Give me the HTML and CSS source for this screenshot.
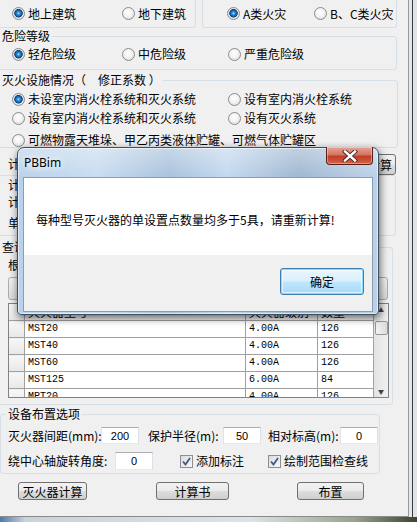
FILE: index.html
```html
<!DOCTYPE html>
<html>
  <head>
    <meta charset="utf-8">
    <title>灭火器布置</title>
    <link rel="stylesheet" href="styles.css">
  </head>
  <body>
    <div class="screen">
      <div class="dlg">
        <!-- building / fire class -->
        <div class="top-row">
          <div class="box box-left">
            <label class="opt w110"><span class="radio on"></span>地上建筑</label>
            <label class="opt"><span class="radio"></span>地下建筑</label>
          </div>
          <div class="box box-right">
            <label class="opt w87"><span class="radio on"></span>A类火灾</label>
            <label class="opt"><span class="radio"></span>B、C类火灾</label>
          </div>
        </div>

        <div class="group danger">
          <div class="cap">危险等级</div>
          <div class="opts">
            <label class="opt w110"><span class="radio on"></span>轻危险级</label>
            <label class="opt w106"><span class="radio"></span>中危险级</label>
            <label class="opt"><span class="radio"></span>严重危险级</label>
          </div>
        </div>

        <div class="group fire">
          <div class="cap">灭火设施情况（　修正系数 ）</div>
          <div class="opts r1">
            <label class="opt w216"><span class="radio on"></span>未设室内消火栓系统和灭火系统</label>
            <label class="opt"><span class="radio"></span>设有室内消火栓系统</label>
          </div>
          <div class="opts r2">
            <label class="opt w216"><span class="radio"></span>设有室内消火栓系统和灭火系统</label>
            <label class="opt"><span class="radio"></span>设有灭火系统</label>
          </div>
          <div class="opts r3">
            <label class="opt"><span class="radio"></span>可燃物露天堆垛、甲乙丙类液体贮罐、可燃气体贮罐区</label>
          </div>
        </div>

        <!-- calculation (mostly behind the message box) -->
        <div class="calc-row">
          <span>计算面积(㎡):</span>
          <button class="btn calc">计算</button>
        </div>
        <div class="box2">
          <div class="line">计算单元最小需配灭火级别:</div>
          <div class="line l2">计算单元最少设置点数:</div>
          <div class="line l3">单具灭火器最小配置灭火级别:</div>
        </div>

        <div class="group result">
          <div class="cap">查询结果</div>
          <div class="line">根据计算结果选择灭火器:</div>
          <div class="combo"></div>
          <div class="grid">
            <table class="list">
              <tr class="head"><th></th><td>灭火器型号</td><td>灭火器级别</td><td>数量</td></tr>
              <tr><th></th><td>MST20</td><td>4.00A</td><td>126</td></tr>
              <tr><th></th><td>MST40</td><td>4.00A</td><td>126</td></tr>
              <tr><th></th><td>MST60</td><td>4.00A</td><td>126</td></tr>
              <tr><th></th><td>MST125</td><td>6.00A</td><td>84</td></tr>
              <tr><th></th><td>MPT20</td><td>4.00A</td><td>126</td></tr>
            </table>
            <div class="vscroll">
              <span class="arrow">▲</span>
              <span class="thumb"></span>
              <span class="arrow down">▼</span>
            </div>
          </div>
        </div>

        <div class="group layout">
          <div class="cap">设备布置选项</div>
          <div class="frow">
            <span class="lbl w93">灭火器间距(mm):</span>
            <input class="num" value="200">
            <span class="lbl w75 ml9">保护半径(m):</span>
            <input class="num" value="50">
            <span class="lbl w72 ml7">相对标高(m):</span>
            <input class="num" value="0">
          </div>
          <div class="frow r2">
            <span class="lbl w107">绕中心轴旋转角度:</span>
            <input class="num" value="0">
            <label class="chk-opt ml27 w88">
              <span class="chk"><svg width="11" height="11" viewBox="0 0 11 11"><path d="M2 5.5 L4.5 8.5 L9 2" fill="none" stroke="#3f5a8c" stroke-width="1.8"/></svg></span>添加标注
            </label>
            <label class="chk-opt">
              <span class="chk"><svg width="11" height="11" viewBox="0 0 11 11"><path d="M2 5.5 L4.5 8.5 L9 2" fill="none" stroke="#3f5a8c" stroke-width="1.8"/></svg></span>绘制范围检查线
            </label>
          </div>
        </div>

        <div class="btns">
          <button class="btn b1">灭火器计算</button>
          <button class="btn b2">计算书</button>
          <button class="btn b3">布置</button>
        </div>
      </div>

      <!-- message box on top -->
      <div class="msgbox">
        <div class="msg-title">PBBim</div>
        <div class="msg-close">
          <svg width="16" height="12" viewBox="0 0 16 12">
            <path d="M3 1.5 L13 10.5 M13 1.5 L3 10.5" stroke="#3b2a28" stroke-width="4.2" stroke-linecap="square"/>
            <path d="M3 1.5 L13 10.5 M13 1.5 L3 10.5" stroke="#ffffff" stroke-width="2.4" stroke-linecap="square"/>
          </svg>
        </div>
        <div class="msg-client">
          <div class="msg-body">每种型号灭火器的单设置点数量均多于5具，请重新计算!</div>
          <div class="msg-foot">
            <button class="ok">确定</button>
          </div>
        </div>
      </div>
    </div>
  </body>
</html>
```

FILE: styles.css
```css
body {
  margin: 0;
  font-family: "Noto Sans CJK SC", sans-serif;
  font-size: 12px;
  color: #000;
}
.screen {
  position: relative;
  width: 417px;
  height: 522px;
  overflow: hidden;
  background: linear-gradient(90deg, #4f78a6 0, #c9d3dc 6%, #dde2e7 60%, #9aa38a 85%, #3c4430 100%);
}
.dlg {
  width: 409px;
  height: 517px;
  box-sizing: border-box;
  background: #f0f0f0;
  border-right: 1px solid #9a9a9a;
  border-bottom: 1px solid #8a8a8a;
  box-shadow: 3px 0 0 #e4e8ec, 4px 0 0 #3a3a3a, 8px 0 0 #dfe4e9;
  overflow: hidden;
  line-height: 14px;
}

/* group boxes */
.box, .group, .box2 {
  border: 1px solid #d5dfe5;
  border-radius: 3px;
  box-sizing: border-box;
}
.cap {
  width: fit-content;
  margin: -8px 0 0 1px;
  padding: 0 2px;
  height: 14px;
  line-height: 14px;
  background: #f0f0f0;
  white-space: nowrap;
}

.top-row {
  display: flex;
  height: 28px;
}
.box {
  display: flex;
  align-items: center;
  height: 28px;
  border-top: none;
  border-radius: 0 0 3px 3px;
}
.box-left {
  margin-left: -2px;
  width: 198px;
  padding-left: 13px;
}
.box-right {
  margin-left: 6px;
  width: 195px;
  padding-left: 24px;
}

.opt {
  display: flex;
  align-items: center;
  white-space: nowrap;
  height: 14px;
}
.w87 { width: 87px; }
.w106 { width: 106px; }
.w110 { width: 110px; }
.w216 { width: 216px; }

.radio {
  flex: none;
  width: 13px;
  height: 13px;
  box-sizing: border-box;
  margin-right: 3px;
  border: 1px solid #8c8c8c;
  border-radius: 50%;
  background: radial-gradient(circle at 45% 40%, #ffffff 0, #f3f3f3 45%, #d3d3d3 100%);
}
.radio.on {
  background: radial-gradient(circle at 50% 48%, #b3e6ff 0, #2f93da 1.4px, #135aa2 3.2px, #0d3e78 3.9px, #eeeeee 4.6px, #d6d6d6 6px);
}

.danger {
  margin: 8px 0 0 -2px;
  width: 399px;
  height: 34px;
}
.danger .opts {
  display: flex;
  align-items: center;
  height: 18px;
  margin-top: 2px;
  padding-left: 13px;
}
.fire {
  margin: 10px 0 0 -2px;
  width: 400px;
  height: 68px;
}
.fire .opts {
  display: flex;
  height: 14px;
  padding-left: 13px;
}
.fire .r1 { margin-top: 5px; }
.fire .r2 { margin-top: 5px; }
.fire .r3 { margin-top: 8px; }

/* middle block */
.calc-row {
  display: flex;
  align-items: center;
  justify-content: space-between;
  height: 20px;
  margin-top: 6px;
  padding: 0 12px 0 8px;
}
.btn {
  box-sizing: border-box;
  height: 18px;
  padding: 0;
  border: 1px solid #707070;
  border-radius: 3px;
  background: linear-gradient(#f2f2f2 0, #ebebeb 48%, #dddddd 52%, #cfcfcf 100%);
  font-family: "Noto Sans CJK SC", sans-serif;
  font-size: 12px;
  line-height: 15px;
  color: #000;
}
.btn.calc {
  width: 36px;
  height: 21px;
  text-align: right;
  padding-right: 3px;
}
.box2 {
  margin: 1px 0 0 -2px;
  width: 398px;
  height: 61px;
  padding: 2px 0 0 9px;
}
.line {
  height: 14px;
  white-space: nowrap;
}
.box2 .l2 { margin-top: 3px; }
.box2 .l3 { margin-top: 7px; }

.result {
  margin: 11px 0 0 -2px;
  width: 395px;
  height: 158px;
  padding-left: 9px;
}
.result .cap {
  margin-left: -8px;
}
.result .line {
  margin-top: 4px;
}
.combo {
  width: 380px;
  height: 23px;
  margin-top: 5px;
  box-sizing: border-box;
  border: 1px solid #acacac;
  border-radius: 3px;
  background: linear-gradient(#f2f2f2, #dcdcdc);
}

.grid {
  display: flex;
  width: 381px;
  height: 95px;
  margin-top: 3px;
  box-sizing: border-box;
  border: 1px solid #828282;
  background: #fff;
  overflow: hidden;
}
.list {
  flex: none;
  width: 364px;
  border-collapse: collapse;
  table-layout: fixed;
  font-family: "Liberation Mono", monospace;
  font-size: 10px;
}
.list th, .list td {
  height: 16px;
  padding: 0 0 0 3px;
  border: 1px solid #a0a0a0;
  text-align: left;
  font-weight: normal;
  white-space: nowrap;
  overflow: hidden;
}
.list tr:first-child th, .list tr:first-child td { border-top: none; }
.list th {
  width: 15px;
  padding: 0;
  border-left: none;
  background: linear-gradient(#f7f7f7, #e8e8e8);
}
.list td:nth-child(2) { width: 217px; }
.list td:nth-child(3) { width: 68px; }
.list td:nth-child(4) { border-right: none; }
.list .head td {
  font-family: "Noto Sans CJK SC", sans-serif;
  font-size: 12px;
  background: #f4f4f4;
}
.vscroll {
  flex: 1;
  display: flex;
  flex-direction: column;
  align-items: center;
  border-left: 1px solid #a0a0a0;
  background: linear-gradient(90deg, #e3e3e3, #f0f0f0);
}
.arrow {
  font-size: 6px;
  line-height: 12px;
  color: #404040;
}
.arrow.down {
  margin-top: auto;
  line-height: 10px;
}
.thumb {
  width: 13px;
  height: 14px;
  margin-top: 5px;
  box-sizing: border-box;
  border: 1px solid #979797;
  border-radius: 2px;
  background: linear-gradient(90deg, #f2f2f2, #dcdcdc);
}

/* layout options */
.layout {
  margin-top: 9px;
  width: 380px;
  height: 60px;
  padding-left: 7px;
}
.layout .cap {
  margin-left: -2px;
}
.frow {
  display: flex;
  align-items: center;
  height: 17px;
  margin-top: 6px;
  white-space: nowrap;
}
.frow.r2 {
  height: 18px;
  margin-top: 8px;
}
.lbl { flex: none; }
.w72 { width: 72px; }
.w75 { width: 75px; }
.w88 { width: 88px; }
.w93 { width: 93px; }
.w107 { width: 107px; }
.ml7 { margin-left: 7px; }
.ml9 { margin-left: 9px; }
.ml27 { margin-left: 27px; }
.num {
  flex: none;
  width: 38px;
  height: 17px;
  margin: 0;
  padding: 0;
  box-sizing: border-box;
  border: 1px solid #abadb3;
  border-color: #abadb3 #dbdfe6 #e3e9ef #e2e3ea;
  background: #fff;
  text-align: center;
  font-family: "Liberation Sans", sans-serif;
  font-size: 11px;
}
.frow.r2 .num { height: 18px; }
.chk-opt {
  display: flex;
  align-items: center;
  flex: none;
}
.chk {
  display: flex;
  align-items: center;
  justify-content: center;
  width: 13px;
  height: 13px;
  margin-right: 3px;
  box-sizing: border-box;
  border: 1px solid #8e8f8f;
  background: linear-gradient(135deg, #dcdcdc, #f7f7f7);
}

.btns {
  display: flex;
  margin-top: 8px;
}
.b1 { margin-left: 18px; width: 69px; }
.b2 { margin-left: 69px; width: 73px; }
.b3 { margin-left: 68px; width: 67px; }

/* message box */
.msgbox {
  position: absolute;
  left: 17px;
  top: 147px;
  width: 362px;
  height: 168px;
  box-sizing: border-box;
  border: 1px solid #3e4f62;
  border-radius: 7px 7px 4px 4px;
  background:
    linear-gradient(180deg, rgba(255, 255, 255, .35), rgba(255, 255, 255, 0) 30px),
    linear-gradient(90deg, #b9d1ea 0, #c8dcf0 22%, #a8c1dc 42%, #c3d8ee 58%, #9fb7d1 78%, #bcd2e8 100%);
  box-shadow: inset 0 0 0 1px rgba(255, 255, 255, .55), 1px 3px 9px rgba(0, 0, 0, .6);
}
.msg-title {
  height: 29px;
  padding-left: 6px;
  line-height: 30px;
  font-family: "Noto Sans", sans-serif;
  font-size: 12px;
  text-shadow: 0 0 6px #fff, 0 0 10px #fff;
}
.msg-close {
  position: absolute;
  top: -1px;
  right: 5px;
  width: 47px;
  height: 18px;
  display: flex;
  align-items: center;
  justify-content: center;
  box-sizing: border-box;
  border: 1px solid #5a2018;
  border-top: none;
  border-radius: 0 0 4px 4px;
  background: linear-gradient(#e9a597 0, #d47462 45%, #c23c26 55%, #d2624a 100%);
  box-shadow: inset 0 0 0 1px rgba(255, 255, 255, .35);
}
.msg-client {
  margin: 0 5px;
  height: 135px;
  box-sizing: border-box;
  border: 1px solid #8a9db3;
  background: #f0f0f0;
}
.msg-body {
  height: 77px;
  box-sizing: border-box;
  padding: 33px 0 0 12px;
  background: #fff;
  white-space: nowrap;
}
.msg-foot {
  display: flex;
  justify-content: flex-end;
  padding: 13px 8px 0 0;
}
.ok {
  width: 84px;
  height: 27px;
  padding: 0;
  border: 1px solid #3c7fb1;
  border-radius: 3px;
  background: linear-gradient(#eaf6fd 0, #d9f0fc 48%, #bee6fd 52%, #a7d9f5 100%);
  box-shadow: inset 0 0 0 1px #8ed6fb, inset 0 0 0 2px rgba(255, 255, 255, .6);
  font-family: "Noto Sans CJK SC", sans-serif;
  font-size: 12px;
  color: #000;
}
```
